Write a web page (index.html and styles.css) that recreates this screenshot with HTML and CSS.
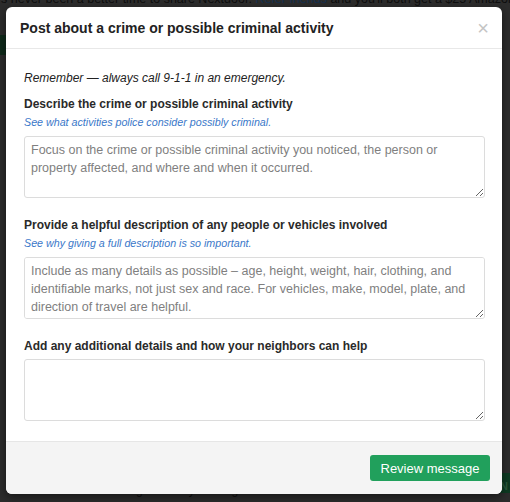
FILE: index.html
```html
<!DOCTYPE html>
<html>
<head>
<meta charset="utf-8">
<link rel="stylesheet" href="styles.css">
</head>
<body>
<div class="page">
  <p class="promo">There's never been a better time to share Nextdoor. <a class="promo-link">Refer friends</a> and you'll both get a $25 Amazon gift card.</p>
  <div class="page-bar"></div>
  <div class="page-bottom">
    <span class="page-btn"></span>
    <span class="page-text">neighbors in your neighborhood</span>
    <span class="page-green">IN</span>
  </div>
</div>

<div class="modal">
  <div class="modal-header">
    <h2 class="modal-title">Post about a crime or possible criminal activity</h2>
    <span class="close">×</span>
  </div>
  <div class="modal-body">
    <p class="remember">Remember — always call 9-1-1 in an emergency.</p>

    <div class="field">
      <label class="label">Describe the crime or possible criminal activity</label>
      <a class="hint">See what activities police consider possibly criminal.</a>
      <textarea class="input" placeholder="Focus on the crime or possible criminal activity you noticed, the person or property affected, and where and when it occurred."></textarea>
    </div>

    <div class="field">
      <label class="label">Provide a helpful description of any people or vehicles involved</label>
      <a class="hint">See why giving a full description is so important.</a>
      <textarea class="input" placeholder="Include as many details as possible – age, height, weight, hair, clothing, and identifiable marks, not just sex and race. For vehicles, make, model, plate, and direction of travel are helpful."></textarea>
    </div>

    <div class="field">
      <label class="label label-nohint">Add any additional details and how your neighbors can help</label>
      <textarea class="input"></textarea>
    </div>
  </div>
  <div class="modal-footer">
    <button class="btn-primary">Review message</button>
  </div>
</div>
</body>
</html>
```

FILE: styles.css
```css
* { box-sizing: border-box; }

html, body {
  margin: 0;
  padding: 0;
  width: 510px;
  height: 502px;
  overflow: hidden;
  background: #2c2c2c;
  font-family: "Liberation Sans", Arial, Helvetica, sans-serif;
}

.page {
  position: relative;
  height: 502px;
}

.promo {
  margin: -9px 0 0 -34px;
  white-space: nowrap;
  font-size: 12.5px;
  line-height: 16px;
  color: #0e0e0e;
}

.promo-link { color: #14304f; }

.page-bar {
  margin-top: 28px;
  width: 6px;
  height: 20px;
  background: #0f2a1a;
}

.page-bottom {
  position: absolute;
  left: 0;
  right: 0;
  bottom: 0;
  height: 20px;
  display: flex;
  align-items: flex-end;
}

.page-btn {
  margin-left: 58px;
  width: 38px;
  height: 8px;
  background: #102a1a;
}

.page-text {
  margin-left: 24px;
  font-size: 12px;
  line-height: 6px;
  color: #0e0e0e;
  white-space: nowrap;
}

.page-green {
  margin-left: auto;
  width: 16px;
  height: 20px;
  background: #0d3a22;
  color: #2a5a3c;
  font-size: 11px;
  font-weight: bold;
  padding: 7px 0 0 3px;
}

.modal {
  position: absolute;
  left: 6px;
  top: 7px;
  width: 496px;
  height: 487px;
  background: #fff;
  border-radius: 6px;
  overflow: hidden;
  display: flex;
  flex-direction: column;
  box-shadow: 0 3px 10px rgba(0,0,0,0.5);
}

.modal-header {
  height: 42px;
  flex: none;
  display: flex;
  align-items: center;
  justify-content: space-between;
  padding: 0 13px 0 14px;
  border-bottom: 1px solid #e8e8e8;
}

.modal-title {
  margin: 0;
  font-size: 14px;
  font-weight: bold;
  color: #222;
}

.close {
  font-size: 20px;
  color: #c4c4c4;
  line-height: 1;
}

.modal-body {
  flex: 1;
  padding: 20px 17px 0 18px;
}

.remember {
  margin: 0 0 8px;
  font-size: 12px;
  line-height: 18px;
  font-style: italic;
  color: #222;
}

.field {
  display: flex;
  flex-direction: column;
  margin-bottom: 18px;
}

.label {
  font-size: 12px;
  font-weight: bold;
  color: #2a2a2a;
  line-height: 18px;
}

.label-nohint { margin-bottom: 4px; }

.hint {
  font-size: 10.7px;
  font-style: italic;
  color: #3a78c9;
  line-height: 18px;
  margin-bottom: 5px;
}

.input {
  display: block;
  width: 100%;
  height: 62px;
  border: 1px solid #dcdcdc;
  border-radius: 3px;
  padding: 4px 14px 4px 6px;
  font-family: "Liberation Sans", Arial, Helvetica, sans-serif;
  font-size: 12.5px;
  line-height: 18px;
  color: #333;
  resize: vertical;
  background: #fff;
}

.input::placeholder { color: #7f7f7f; }

.modal-footer {
  flex: none;
  height: 53px;
  background: #f4f4f4;
  border-top: 1px solid #e6e6e6;
  display: flex;
  justify-content: flex-end;
  align-items: flex-start;
  padding: 13px 12px 0 0;
}

.btn-primary {
  height: 26px;
  width: 120px;
  border: none;
  border-radius: 3px;
  background: #21a05c;
  color: #fff;
  font-family: "Liberation Sans", Arial, Helvetica, sans-serif;
  font-size: 13px;
  padding: 0;
}
```
